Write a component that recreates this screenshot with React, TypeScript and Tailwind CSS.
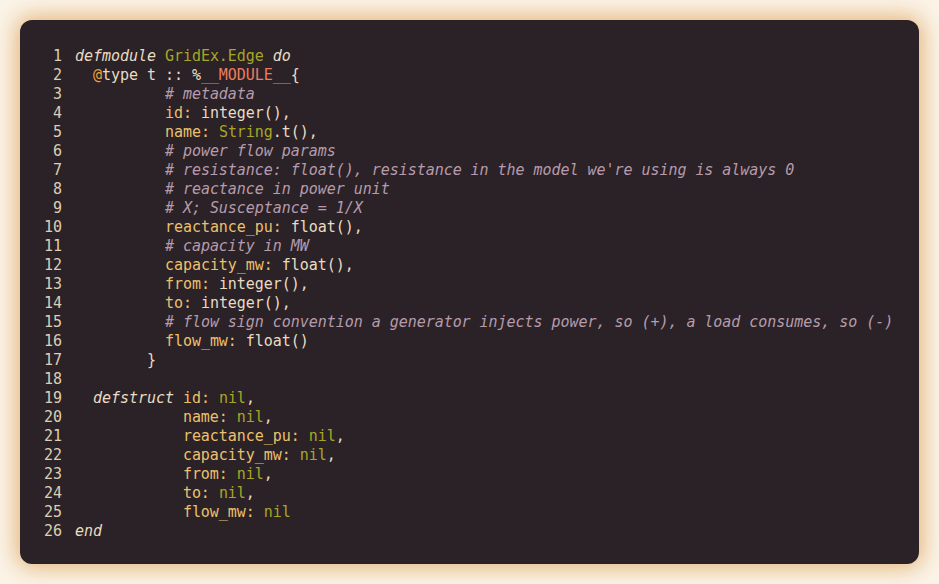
import React from "react";

type Tok = [string, string?];

const C = {
  d: "text-[#e9dcc2]",
  k: "text-[#ecc06c]",
  g: "text-[#a8a626]",
  c: "text-[#b79bac] italic",
  i: "text-[#e9dcc2] italic",
  a: "text-[#eba03c]",
  m: "text-[#ee7d5c]",
};

const lines: Tok[][] = [
  [["defmodule", "i"], [" "], ["GridEx.Edge", "g"], [" "], ["do", "i"]],
  [["  "], ["@", "a"], ["type t :: %"], ["__MODULE__", "m"], ["{"]],
  [["          "], ["# metadata", "c"]],
  [["          "], ["id:", "k"], [" integer(),"]],
  [["          "], ["name:", "k"], [" "], ["String", "g"], [".t(),"]],
  [["          "], ["# power flow params", "c"]],
  [["          "], ["# resistance: float(), resistance in the model we're using is always 0", "c"]],
  [["          "], ["# reactance in power unit", "c"]],
  [["          "], ["# X; Susceptance = 1/X", "c"]],
  [["          "], ["reactance_pu:", "k"], [" float(),"]],
  [["          "], ["# capacity in MW", "c"]],
  [["          "], ["capacity_mw:", "k"], [" float(),"]],
  [["          "], ["from:", "k"], [" integer(),"]],
  [["          "], ["to:", "k"], [" integer(),"]],
  [["          "], ["# flow sign convention a generator injects power, so (+), a load consumes, so (-)", "c"]],
  [["          "], ["flow_mw:", "k"], [" float()"]],
  [["        }"]],
  [[""]],
  [["  "], ["defstruct", "i"], [" "], ["id:", "k"], [" "], ["nil", "g"], [","]],
  [["            "], ["name:", "k"], [" "], ["nil", "g"], [","]],
  [["            "], ["reactance_pu:", "k"], [" "], ["nil", "g"], [","]],
  [["            "], ["capacity_mw:", "k"], [" "], ["nil", "g"], [","]],
  [["            "], ["from:", "k"], [" "], ["nil", "g"], [","]],
  [["            "], ["to:", "k"], [" "], ["nil", "g"], [","]],
  [["            "], ["flow_mw:", "k"], [" "], ["nil", "g"]],
  [["end", "i"]],
];

export default function App() {
  return (
    <div className="w-[939px] h-[584px] bg-[#fbf4e8] p-[20px]">
      <div
        className="w-[899px] h-[544px] rounded-[12px] bg-[#2a2227] pt-[27px] pl-[24px] shadow-[0_0_22px_4px_rgba(220,160,90,0.75)]"
        style={{ fontFamily: '"DejaVu Sans Mono", "Liberation Mono", monospace' }}
      >
        {lines.map((toks, idx) => (
          <div key={idx} className="flex h-[19px] text-[15px] leading-[19px] tracking-[-0.04px] whitespace-pre">
            <span className="w-[18px] text-right text-[#dccfb2] mr-[13px]">{idx + 1}</span>
            <span>
              {toks.map(([t, k], j) => (
                <span key={j} className={C[(k ?? "d") as keyof typeof C]}>
                  {t}
                </span>
              ))}
            </span>
          </div>
        ))}
      </div>
    </div>
  );
}
